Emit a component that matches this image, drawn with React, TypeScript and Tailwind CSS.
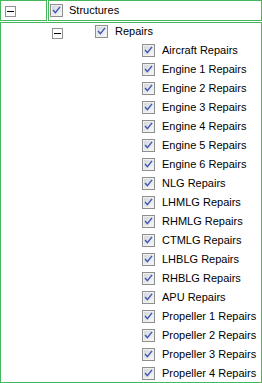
import React from "react";

const Check = () => (
  <svg width="13" height="13" viewBox="0 0 13 13" className="shrink-0 block">
    <defs>
      <linearGradient id="cbg" x1="0" y1="0" x2="1" y2="1">
        <stop offset="0" stopColor="#d4d7db" />
        <stop offset="1" stopColor="#f6f6f6" />
      </linearGradient>
    </defs>
    <rect x="0.5" y="0.5" width="12" height="12" fill="#f0f0f0" stroke="#8e8f8f" />
    <rect x="2" y="2" width="9" height="9" fill="url(#cbg)" />
    <path d="M3.5 6.5 L5.4 8.7 L9.6 3.4" fill="none" stroke="#3d55b4" strokeWidth="1.4" strokeLinecap="square" />
  </svg>
);

const Minus = () => (
  <svg width="11" height="11" viewBox="0 0 11 11" className="shrink-0 block">
    <rect x="0.5" y="0.5" width="10" height="10" fill="#ffffff" stroke="#919191" />
    <rect x="2" y="5" width="7" height="1" fill="#000000" />
  </svg>
);

const leaves = [
  "Aircraft Repairs",
  "Engine 1 Repairs",
  "Engine 2 Repairs",
  "Engine 3 Repairs",
  "Engine 4 Repairs",
  "Engine 5 Repairs",
  "Engine 6 Repairs",
  "NLG Repairs",
  "LHMLG Repairs",
  "RHMLG Repairs",
  "CTMLG Repairs",
  "LHBLG Repairs",
  "RHBLG Repairs",
  "APU Repairs",
  "Propeller 1 Repairs",
  "Propeller 2 Repairs",
  "Propeller 3 Repairs",
  "Propeller 4 Repairs",
];

export default function App() {
  return (
    <div
      className="w-[262px] h-[383px] bg-white overflow-hidden text-[11px] leading-[13px] text-black"
      style={{ fontFamily: '"Liberation Sans", Arial, sans-serif' }}
    >
      <div className="flex h-[21px]">
        <div className="w-[47px] h-[21px] border border-[#46b85c] pl-[4px] pt-[5px]">
          <Minus />
        </div>
        <div className="ml-[1px] w-[214px] h-[21px] border border-[#46b85c] flex items-start pl-[1px] pt-[3px]">
          <Check />
          <span className="ml-[6px]">Structures</span>
        </div>
      </div>
      <div className="mt-[1px] w-[262px] h-[361px] border border-[#46b85c] overflow-hidden pt-[2px]">
        <div className="flex h-[19px] items-start">
          <div className="ml-[51px] mt-[3px]">
            <Minus />
          </div>
          <div className="ml-[32px]">
            <Check />
          </div>
          <span className="ml-[7px]">Repairs</span>
        </div>
        {leaves.map((l) => (
          <div key={l} className="flex h-[19px] items-start pl-[141px]">
            <Check />
            <span className="ml-[7px]">{l}</span>
          </div>
        ))}
      </div>
    </div>
  );
}
